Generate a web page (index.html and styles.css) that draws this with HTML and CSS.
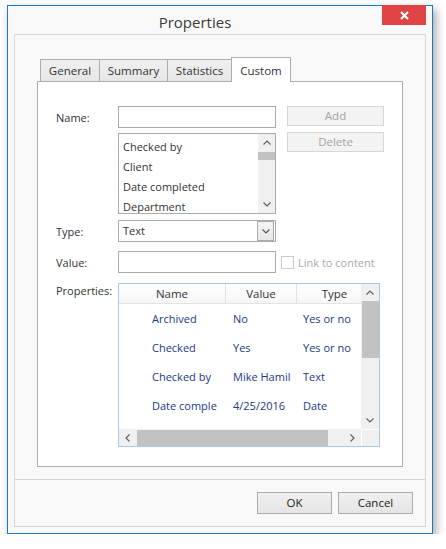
FILE: index.html
```html
<!DOCTYPE html>
<html>
<head>
<meta charset="utf-8">
<link rel="stylesheet" href="styles.css">
</head>
<body>
<div class="window">
  <div class="titlebar">
    <div class="title">Properties</div>
    <div class="close"><svg width="9" height="9" viewBox="0 0 9 9"><path d="M1 1L8 8M8 1L1 8" stroke="#fff" stroke-width="2.2" fill="none"/></svg></div>
  </div>
  <div class="panel">
    <div class="tabs-area">
      <div class="tabstrip">
        <div class="tab t-general">General</div>
        <div class="tab t-summary">Summary</div>
        <div class="tab t-stats">Statistics</div>
        <div class="tab t-custom active">Custom</div>
      </div>
      <div class="tabpage">
        <div class="top">
          <div class="fields">
            <div class="row">
              <div class="label">Name:</div>
              <div class="input"></div>
            </div>
            <div class="row row-list">
              <div class="label"></div>
              <div class="listbox">
                <div class="items">
                  <div class="item">Checked by</div>
                  <div class="item">Client</div>
                  <div class="item">Date completed</div>
                  <div class="item">Department</div>
                </div>
                <div class="vscroll small">
                  <div class="arrow"><svg width="8" height="5" viewBox="0 0 8 5"><path d="M0.5 4.5L4 1L7.5 4.5" stroke="#606060" stroke-width="1.2" fill="none"/></svg></div>
                  <div class="thumb list-thumb"></div>
                  <div class="spacer"></div>
                  <div class="arrow"><svg width="8" height="5" viewBox="0 0 8 5"><path d="M0.5 0.5L4 4L7.5 0.5" stroke="#606060" stroke-width="1.2" fill="none"/></svg></div>
                </div>
              </div>
            </div>
          </div>
          <div class="side">
            <div class="dbtn">Add</div>
            <div class="dbtn">Delete</div>
          </div>
        </div>
        <div class="row row-type">
          <div class="label">Type:</div>
          <div class="combo">
            <div class="combo-text">Text</div>
            <div class="combo-btn"><svg width="8" height="5" viewBox="0 0 8 5"><path d="M0.5 0.5L4 4L7.5 0.5" stroke="#555" stroke-width="1.2" fill="none"/></svg></div>
          </div>
        </div>
        <div class="row row-value">
          <div class="label">Value:</div>
          <div class="input"></div>
          <div class="check"></div>
          <div class="check-label">Link to content</div>
        </div>
        <div class="row row-props">
          <div class="label label-top">Properties:</div>
          <div class="grid">
            <div class="gmain">
              <div class="ghead">
                <div class="gc c1 hc">Name</div>
                <div class="gc c2 hc">Value</div>
                <div class="gc c3 hc">Type</div>
              </div>
              <div class="grow">
                <div class="gc c1 dc">Archived</div>
                <div class="gc c2 dc">No</div>
                <div class="gc c3 dc">Yes or no</div>
              </div>
              <div class="grow">
                <div class="gc c1 dc">Checked</div>
                <div class="gc c2 dc">Yes</div>
                <div class="gc c3 dc">Yes or no</div>
              </div>
              <div class="grow">
                <div class="gc c1 dc">Checked by</div>
                <div class="gc c2 dc">Mike Hamil</div>
                <div class="gc c3 dc">Text</div>
              </div>
              <div class="grow">
                <div class="gc c1 dc">Date comple</div>
                <div class="gc c2 dc">4/25/2016</div>
                <div class="gc c3 dc">Date</div>
              </div>
            </div>
            <div class="vscroll big">
              <div class="arrow"><svg width="8" height="5" viewBox="0 0 8 5"><path d="M0.5 4.5L4 1L7.5 4.5" stroke="#606060" stroke-width="1.2" fill="none"/></svg></div>
              <div class="thumb grid-vthumb"></div>
              <div class="spacer"></div>
              <div class="arrow"><svg width="8" height="5" viewBox="0 0 8 5"><path d="M0.5 0.5L4 4L7.5 0.5" stroke="#606060" stroke-width="1.2" fill="none"/></svg></div>
            </div>
            <div class="hscroll">
              <div class="harrow"><svg width="5" height="8" viewBox="0 0 5 8"><path d="M4.5 0.5L1 4L4.5 7.5" stroke="#606060" stroke-width="1.2" fill="none"/></svg></div>
              <div class="hthumb"></div>
              <div class="spacer"></div>
              <div class="harrow"><svg width="5" height="8" viewBox="0 0 5 8"><path d="M0.5 0.5L4 4L0.5 7.5" stroke="#606060" stroke-width="1.2" fill="none"/></svg></div>
            </div>
            <div class="corner"></div>
          </div>
        </div>
      </div>
    </div>
    <div class="footer">
      <div class="btn">OK</div>
      <div class="btn">Cancel</div>
    </div>
  </div>
</div>
</body>
</html>
```

FILE: styles.css
```css
* { box-sizing: border-box; }
body {
  margin: 0;
  background: #ffffff;
  font-family: "Open Sans", "Noto Sans", sans-serif;
  font-size: 11px;
  color: #333;
}
.window {
  margin: 5px 0 0 7px;
  width: 426px;
  height: 529px;
  border: 1px solid #1a78c8;
  background: #f9f9f9;
  box-shadow: 3px 4px 9px rgba(0,0,0,0.35);
  padding: 0 6px 6px 6px;
  display: flex;
  flex-direction: column;
}
.titlebar {
  height: 28px;
  display: flex;
  align-items: flex-start;
  margin: 0 -6px;
}
.title {
  flex: 1;
  text-align: center;
  font-size: 15px;
  line-height: 28px;
  padding-top: 2px;
  color: #3a3a3a;
}
.close {
  width: 44px;
  height: 20px;
  margin-top: -1px;
  margin-right: 6px;
  background: #e04343;
  display: flex;
  align-items: center;
  justify-content: center;
}
.panel {
  height: 493px;
  border: 1px solid #d6d6d6;
  background: #f9f9f9;
  display: flex;
  flex-direction: column;
}
.tabs-area {
  margin: 22px 22px 0 22px;
}
.tabstrip {
  display: flex;
  align-items: flex-end;
  height: 24px;
  padding-left: 3px;
}
.tab {
  height: 22px;
  border: 1px solid #acacac;
  border-bottom: none;
  background: linear-gradient(#f0f0f0, #e6e6e6);
  display: flex;
  align-items: center;
  justify-content: center;
  margin-left: -1px;
  font-size: 11.5px;
  color: #333;
  padding-bottom: 1px;
}
.t-general { width: 60px; margin-left: 0; }
.t-summary { width: 69px; }
.t-stats { width: 65px; }
.t-custom { width: 60px; }
.tab.active {
  height: 25px;
  background: #ffffff;
  margin-bottom: -1px;
  position: relative;
  z-index: 1;
  padding-top: 2px;
}
.tabpage {
  height: 386px;
  border: 1px solid #acacac;
  background: #ffffff;
  padding: 24px 0 0 18px;
}
.top { display: flex; }
.fields { display: flex; flex-direction: column; }
.row { display: flex; align-items: center; }
.label { width: 62px; flex: none; color: #333; }
.label-top { align-self: flex-start; margin-top: 0; line-height: 15px; }
.input {
  width: 158px;
  height: 22px;
  border: 1px solid #ababab;
  background: #fff;
}
.row-list { margin-top: 5px; }
.listbox {
  width: 158px;
  height: 81px;
  border: 1px solid #ababab;
  background: #fff;
  display: flex;
}
.items {
  flex: 1;
  overflow: hidden;
  padding: 3px 0 0 4px;
}
.item { height: 20px; line-height: 20px; white-space: nowrap; color: #333; }
.vscroll {
  width: 17px;
  background: #f0f0f0;
  display: flex;
  flex-direction: column;
}
.vscroll .arrow {
  height: 17px;
  display: flex;
  align-items: center;
  justify-content: center;
  flex: none;
}
.vscroll .spacer, .hscroll .spacer { flex: 1; }
.thumb { background: #c2c2c2; flex: none; }
.list-thumb { height: 8px; margin-top: 1px; }
.side {
  margin-left: 11px;
  display: flex;
  flex-direction: column;
  gap: 6px;
}
.dbtn {
  width: 97px;
  height: 20px;
  border: 1px solid #d6d6d6;
  background: #f3f3f3;
  color: #a3a3a3;
  text-align: center;
  line-height: 18px;
  font-size: 11.5px;
}
.row-type { margin-top: 6px; }
.combo {
  width: 158px;
  height: 22px;
  border: 1px solid #ababab;
  background: #fff;
  display: flex;
  padding: 0 1px 0 0;
}
.combo-text { flex: 1; padding-left: 4px; line-height: 20px; }
.combo-btn {
  width: 17px;
  height: 20px;
  border: 1px solid #acacac;
  background: linear-gradient(#f4f4f4, #e8e8e8);
  display: flex;
  align-items: center;
  justify-content: center;
}
.row-value { margin-top: 9px; }
.check {
  width: 13px;
  height: 13px;
  border: 1px solid #cccccc;
  background: #fff;
  margin-left: 5px;
}
.check-label { margin-left: 4px; color: #a8a8a8; }
.row-props { margin-top: 10px; }
.grid {
  width: 262px;
  height: 164px;
  border: 1px solid #a9c9e6;
  background: #fff;
  display: grid;
  grid-template-columns: 242px 18px;
  grid-template-rows: 145px 17px;
}
.gmain { overflow: hidden; }
.ghead {
  display: flex;
  height: 20px;
  border-bottom: 1px solid #e3e3e3;
  background: linear-gradient(#ffffff, #f6f6f6);
}
.grow { display: flex; height: 29px; }
.gc {
  flex: none;
  white-space: nowrap;
  overflow: hidden;
}
.c1 { width: 107px; }
.c2 { width: 71px; }
.c3 { width: 75px; }
.hc {
  text-align: center;
  line-height: 19px;
  color: #333;
  font-size: 11.5px;
}
.hc.c1, .hc.c2 { border-right: 1px solid #e3e3e3; }
.dc { line-height: 29px; color: #22397f; }
.dc.c1 { padding-left: 33px; padding-right: 1px; }
.dc.c2 { padding-left: 7px; padding-right: 1px; }
.dc.c3 { padding-left: 6px; }
.vscroll.big { width: 18px; }
.grid-vthumb { height: 57px; margin-left: 1px; }
.hscroll {
  display: flex;
  background: #f0f0f0;
}
.harrow {
  width: 17px;
  display: flex;
  align-items: center;
  justify-content: center;
  flex: none;
}
.hthumb { width: 191px; background: #c2c2c2; margin: 1px 0 0 1px; }
.corner {
  background: #f0f0f0;
  border-left: 1px solid #fff;
  border-top: 1px solid #fff;
}
.footer {
  margin-top: 12px;
  border-top: 1px solid #d6d6d6;
  padding: 12px 12px 0 0;
  display: flex;
  justify-content: flex-end;
  gap: 6px;
}
.btn {
  width: 75px;
  height: 22px;
  border: 1px solid #acacac;
  background: linear-gradient(#f0f0f0, #e5e5e5);
  color: #222;
  text-align: center;
  line-height: 20px;
  font-size: 11.5px;
}
```
